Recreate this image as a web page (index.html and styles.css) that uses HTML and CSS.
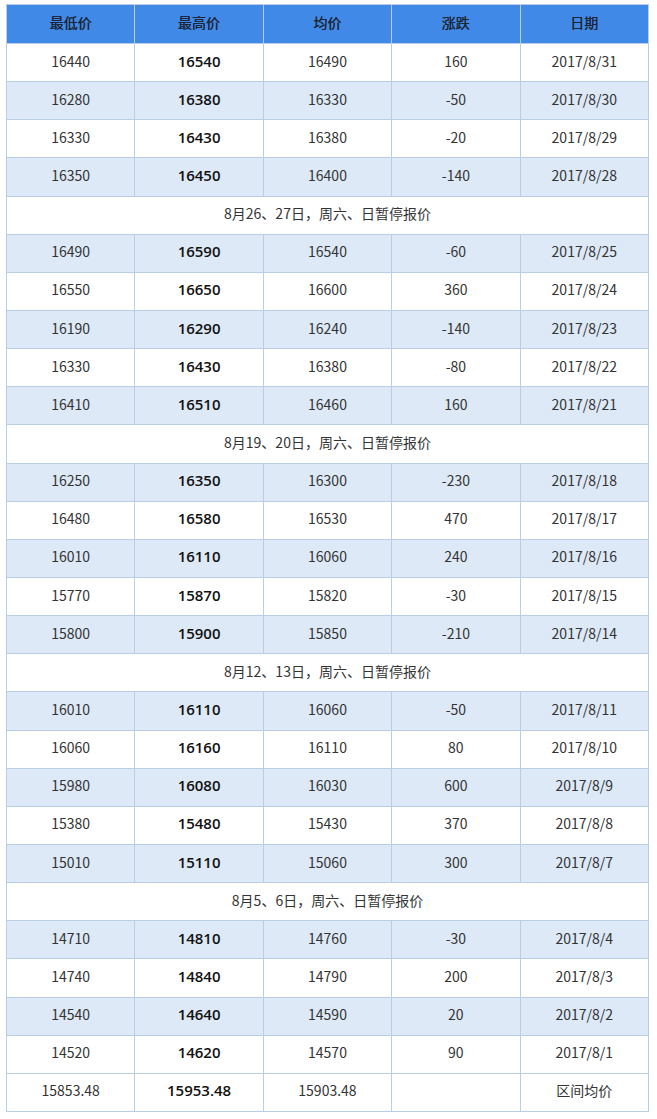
FILE: index.html
```html
<!DOCTYPE html>
<html lang="zh-CN">
<head>
<meta charset="utf-8">
<title>价格表</title>
<link rel="stylesheet" href="styles.css">
</head>
<body>
<table class="price-table">
  <thead>
    <tr><th>最低价</th><th>最高价</th><th>均价</th><th>涨跌</th><th>日期</th></tr>
  </thead>
  <tbody>
    <tr><td>16440</td><td class="hi">16540</td><td>16490</td><td>160</td><td>2017/8/31</td></tr>
    <tr class="alt"><td>16280</td><td class="hi">16380</td><td>16330</td><td>-50</td><td>2017/8/30</td></tr>
    <tr><td>16330</td><td class="hi">16430</td><td>16380</td><td>-20</td><td>2017/8/29</td></tr>
    <tr class="alt"><td>16350</td><td class="hi">16450</td><td>16400</td><td>-140</td><td>2017/8/28</td></tr>
    <tr class="note"><td colspan="5">8月26、27日，周六、日暂停报价</td></tr>
    <tr class="alt"><td>16490</td><td class="hi">16590</td><td>16540</td><td>-60</td><td>2017/8/25</td></tr>
    <tr><td>16550</td><td class="hi">16650</td><td>16600</td><td>360</td><td>2017/8/24</td></tr>
    <tr class="alt"><td>16190</td><td class="hi">16290</td><td>16240</td><td>-140</td><td>2017/8/23</td></tr>
    <tr><td>16330</td><td class="hi">16430</td><td>16380</td><td>-80</td><td>2017/8/22</td></tr>
    <tr class="alt"><td>16410</td><td class="hi">16510</td><td>16460</td><td>160</td><td>2017/8/21</td></tr>
    <tr class="note"><td colspan="5">8月19、20日，周六、日暂停报价</td></tr>
    <tr class="alt"><td>16250</td><td class="hi">16350</td><td>16300</td><td>-230</td><td>2017/8/18</td></tr>
    <tr><td>16480</td><td class="hi">16580</td><td>16530</td><td>470</td><td>2017/8/17</td></tr>
    <tr class="alt"><td>16010</td><td class="hi">16110</td><td>16060</td><td>240</td><td>2017/8/16</td></tr>
    <tr><td>15770</td><td class="hi">15870</td><td>15820</td><td>-30</td><td>2017/8/15</td></tr>
    <tr class="alt"><td>15800</td><td class="hi">15900</td><td>15850</td><td>-210</td><td>2017/8/14</td></tr>
    <tr class="note"><td colspan="5">8月12、13日，周六、日暂停报价</td></tr>
    <tr class="alt"><td>16010</td><td class="hi">16110</td><td>16060</td><td>-50</td><td>2017/8/11</td></tr>
    <tr><td>16060</td><td class="hi">16160</td><td>16110</td><td>80</td><td>2017/8/10</td></tr>
    <tr class="alt"><td>15980</td><td class="hi">16080</td><td>16030</td><td>600</td><td>2017/8/9</td></tr>
    <tr><td>15380</td><td class="hi">15480</td><td>15430</td><td>370</td><td>2017/8/8</td></tr>
    <tr class="alt"><td>15010</td><td class="hi">15110</td><td>15060</td><td>300</td><td>2017/8/7</td></tr>
    <tr class="note"><td colspan="5">8月5、6日，周六、日暂停报价</td></tr>
    <tr class="alt"><td>14710</td><td class="hi">14810</td><td>14760</td><td>-30</td><td>2017/8/4</td></tr>
    <tr><td>14740</td><td class="hi">14840</td><td>14790</td><td>200</td><td>2017/8/3</td></tr>
    <tr class="alt"><td>14540</td><td class="hi">14640</td><td>14590</td><td>20</td><td>2017/8/2</td></tr>
    <tr><td>14520</td><td class="hi">14620</td><td>14570</td><td>90</td><td>2017/8/1</td></tr>
    <tr><td>15853.48</td><td class="hi">15953.48</td><td>15903.48</td><td></td><td>区间均价</td></tr>
  </tbody>
</table>
</body>
</html>
```

FILE: styles.css
```css
html, body {
  margin: 0;
  padding: 0;
  background: #ffffff;
}

body {
  padding: 4px 0 0 6px;
  font-family: "Noto Sans CJK SC", "Noto Sans", sans-serif;
  color: #333333;
}

.price-table {
  border-collapse: collapse;
  width: 643px;
  table-layout: fixed;
  border: 1px solid #b9cde6;
}

.price-table th,
.price-table td {
  border: 1px solid #b9cde6;
  text-align: center;
  vertical-align: middle;
  padding: 0 0 4px 0;
  font-size: 14px;
  line-height: 18px;
}

.price-table thead tr {
  height: 39px;
}

.price-table tbody tr {
  height: 38.15px;
}

.price-table th {
  background: #4189e6;
  color: #1d2433;
  font-weight: normal;
  text-shadow: 0 0 0.5px #1d2433;
}

.price-table tr.alt td {
  background: #dde9f7;
}

.price-table td.hi {
  font-family: "Open Sans", "Noto Sans", sans-serif;
  font-weight: 600;
  font-size: 15px;
  color: #111111;
}

.price-table tr.note td {
  background: #ffffff;
}
```
